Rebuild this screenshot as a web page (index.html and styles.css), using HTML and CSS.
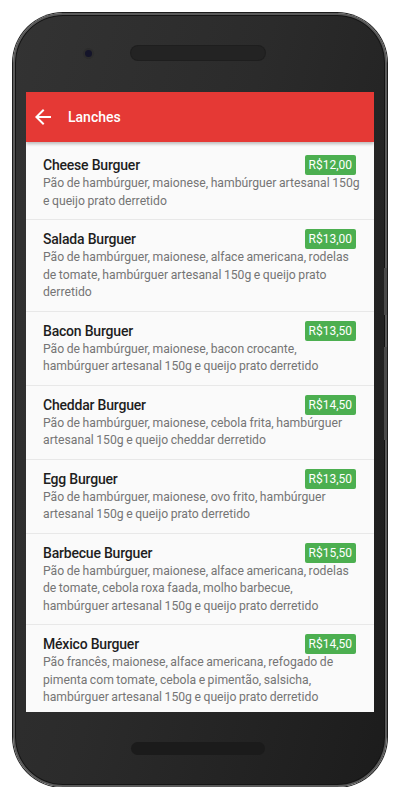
FILE: index.html
```html
<!DOCTYPE html>
<html lang="pt-BR">
<head>
    <meta charset="UTF-8">
    <meta name="viewport" content="width=device-width, initial-scale=1.0">
    <title>Lanches</title>
    <link rel="stylesheet" href="styles.css">
</head>
<body>
    <div class="phone">
        <span class="side-btn power"></span>
        <span class="side-btn volume"></span>
        <div class="bezel-top">
            <span class="camera"></span>
            <span class="speaker"></span>
        </div>
        <div class="screen">
            <header class="appbar">
                <svg class="back" viewBox="0 0 24 24" width="24" height="24">
                    <path d="M20 11H7.83l5.59-5.59L12 4l-8 8 8 8 1.41-1.41L7.83 13H20v-2z" fill="#fff"/>
                </svg>
                <h1>Lanches</h1>
            </header>
            <ul class="menu">
                <li class="item">
                    <div class="item-head">
                        <span class="name">Cheese Burguer</span>
                        <span class="price">R$12,00</span>
                    </div>
                    <p class="desc">Pão de hambúrguer, maionese, hambúrguer artesanal 150g<br>e queijo prato derretido</p>
                </li>
                <li class="item">
                    <div class="item-head">
                        <span class="name">Salada Burguer</span>
                        <span class="price">R$13,00</span>
                    </div>
                    <p class="desc">Pão de hambúrguer, maionese, alface americana, rodelas<br>de tomate, hambúrguer artesanal 150g e queijo prato<br>derretido</p>
                </li>
                <li class="item">
                    <div class="item-head">
                        <span class="name">Bacon Burguer</span>
                        <span class="price">R$13,50</span>
                    </div>
                    <p class="desc">Pão de hambúrguer, maionese, bacon crocante,<br>hambúrguer artesanal 150g e queijo prato derretido</p>
                </li>
                <li class="item">
                    <div class="item-head">
                        <span class="name">Cheddar Burguer</span>
                        <span class="price">R$14,50</span>
                    </div>
                    <p class="desc">Pão de hambúrguer, maionese, cebola frita, hambúrguer<br>artesanal 150g e queijo cheddar derretido</p>
                </li>
                <li class="item">
                    <div class="item-head">
                        <span class="name">Egg Burguer</span>
                        <span class="price">R$13,50</span>
                    </div>
                    <p class="desc">Pão de hambúrguer, maionese, ovo frito, hambúrguer<br>artesanal 150g e queijo prato derretido</p>
                </li>
                <li class="item">
                    <div class="item-head">
                        <span class="name">Barbecue Burguer</span>
                        <span class="price">R$15,50</span>
                    </div>
                    <p class="desc">Pão de hambúrguer, maionese, alface americana, rodelas<br>de tomate, cebola roxa faada, molho barbecue,<br>hambúrguer artesanal 150g e queijo prato derretido</p>
                </li>
                <li class="item">
                    <div class="item-head">
                        <span class="name">México Burguer</span>
                        <span class="price">R$14,50</span>
                    </div>
                    <p class="desc">Pão francês, maionese, alface americana, refogado de<br>pimenta com tomate, cebola e pimentão, salsicha,<br>hambúrguer artesanal 150g e queijo prato derretido</p>
                </li>
            </ul>
        </div>
        <div class="bezel-bottom">
            <span class="home-bar"></span>
        </div>
    </div>
</body>
</html>
```

FILE: styles.css
```css
body {
    margin: 0;
    padding: 0;
    background-color: #fff;
    font-family: Roboto, "Noto Sans", sans-serif;
}
.phone {
    position: relative;
    width: 370px;
    height: 770px;
    margin: 13px auto 0;
    border: 2px solid #5a5a5a;
    border-radius: 50px;
    box-shadow: 0 0 0 1px #1c1c1c, inset 0 0 0 1px #141414;
    background: linear-gradient(105deg, #333 0%, #2b2b2b 45%, #1c1c1c 100%);
    display: flex;
    flex-direction: column;
    align-items: center;
}
.side-btn {
    position: absolute;
    right: -2px;
    width: 3px;
    background: #4a4a4a;
}
.side-btn.power {
    top: 253px;
    height: 47px;
}
.side-btn.volume {
    top: 332px;
    height: 93px;
}
.bezel-top {
    height: 77px;
    width: 100%;
    box-sizing: border-box;
    display: flex;
    align-items: flex-start;
    padding: 31px 0 0 70px;
}
.camera {
    width: 7px;
    height: 7px;
    margin-top: 4px;
    margin-right: 39px;
    border-radius: 50%;
    background: #14142a;
    box-shadow: 0 0 0 2px #2c2c2c;
}
.speaker {
    width: 134px;
    height: 14px;
    border-radius: 7px;
    background: #232323;
    box-shadow: 0 0 0 1px #1e1e1e;
}
.screen {
    width: 348px;
    height: 620px;
    background: #fafafa;
    overflow: hidden;
    display: flex;
    flex-direction: column;
}
.appbar {
    height: 50px;
    flex-shrink: 0;
    background: #e53935;
    display: flex;
    align-items: center;
    padding-left: 5px;
    box-shadow: 0 2px 3px rgba(0, 0, 0, 0.25);
    position: relative;
}
.back {
    display: block;
}
.appbar h1 {
    margin: 0 0 0 13px;
    color: #fff;
    font-size: 14px;
    font-weight: 500;
}
.menu {
    list-style: none;
    margin: 0;
    padding: 4px 0 0;
}
.item {
    padding: 9px 18px 9px 17px;
    border-bottom: 1px solid #e8e8e8;
}
.item-head {
    display: flex;
    justify-content: space-between;
    align-items: center;
    height: 20px;
}
.name {
    font-size: 14px;
    font-weight: 500;
    letter-spacing: -0.2px;
    color: #1e1e1e;
}
.price {
    background: #4caf50;
    color: #fff;
    font-size: 12px;
    line-height: 20px;
    padding: 0 4px;
    border-radius: 2px;
}
.desc {
    margin: 0;
    font-size: 12.2px;
    word-spacing: -0.5px;
    line-height: 17.5px;
    white-space: nowrap;
    color: #757575;
}
.bezel-bottom {
    flex: 1;
    width: 100%;
    display: flex;
    justify-content: center;
    align-items: flex-start;
    padding-top: 30px;
}
.home-bar {
    width: 134px;
    height: 13px;
    margin-left: -4px;
    border-radius: 7px;
    background: #1b1b1b;
}
```
